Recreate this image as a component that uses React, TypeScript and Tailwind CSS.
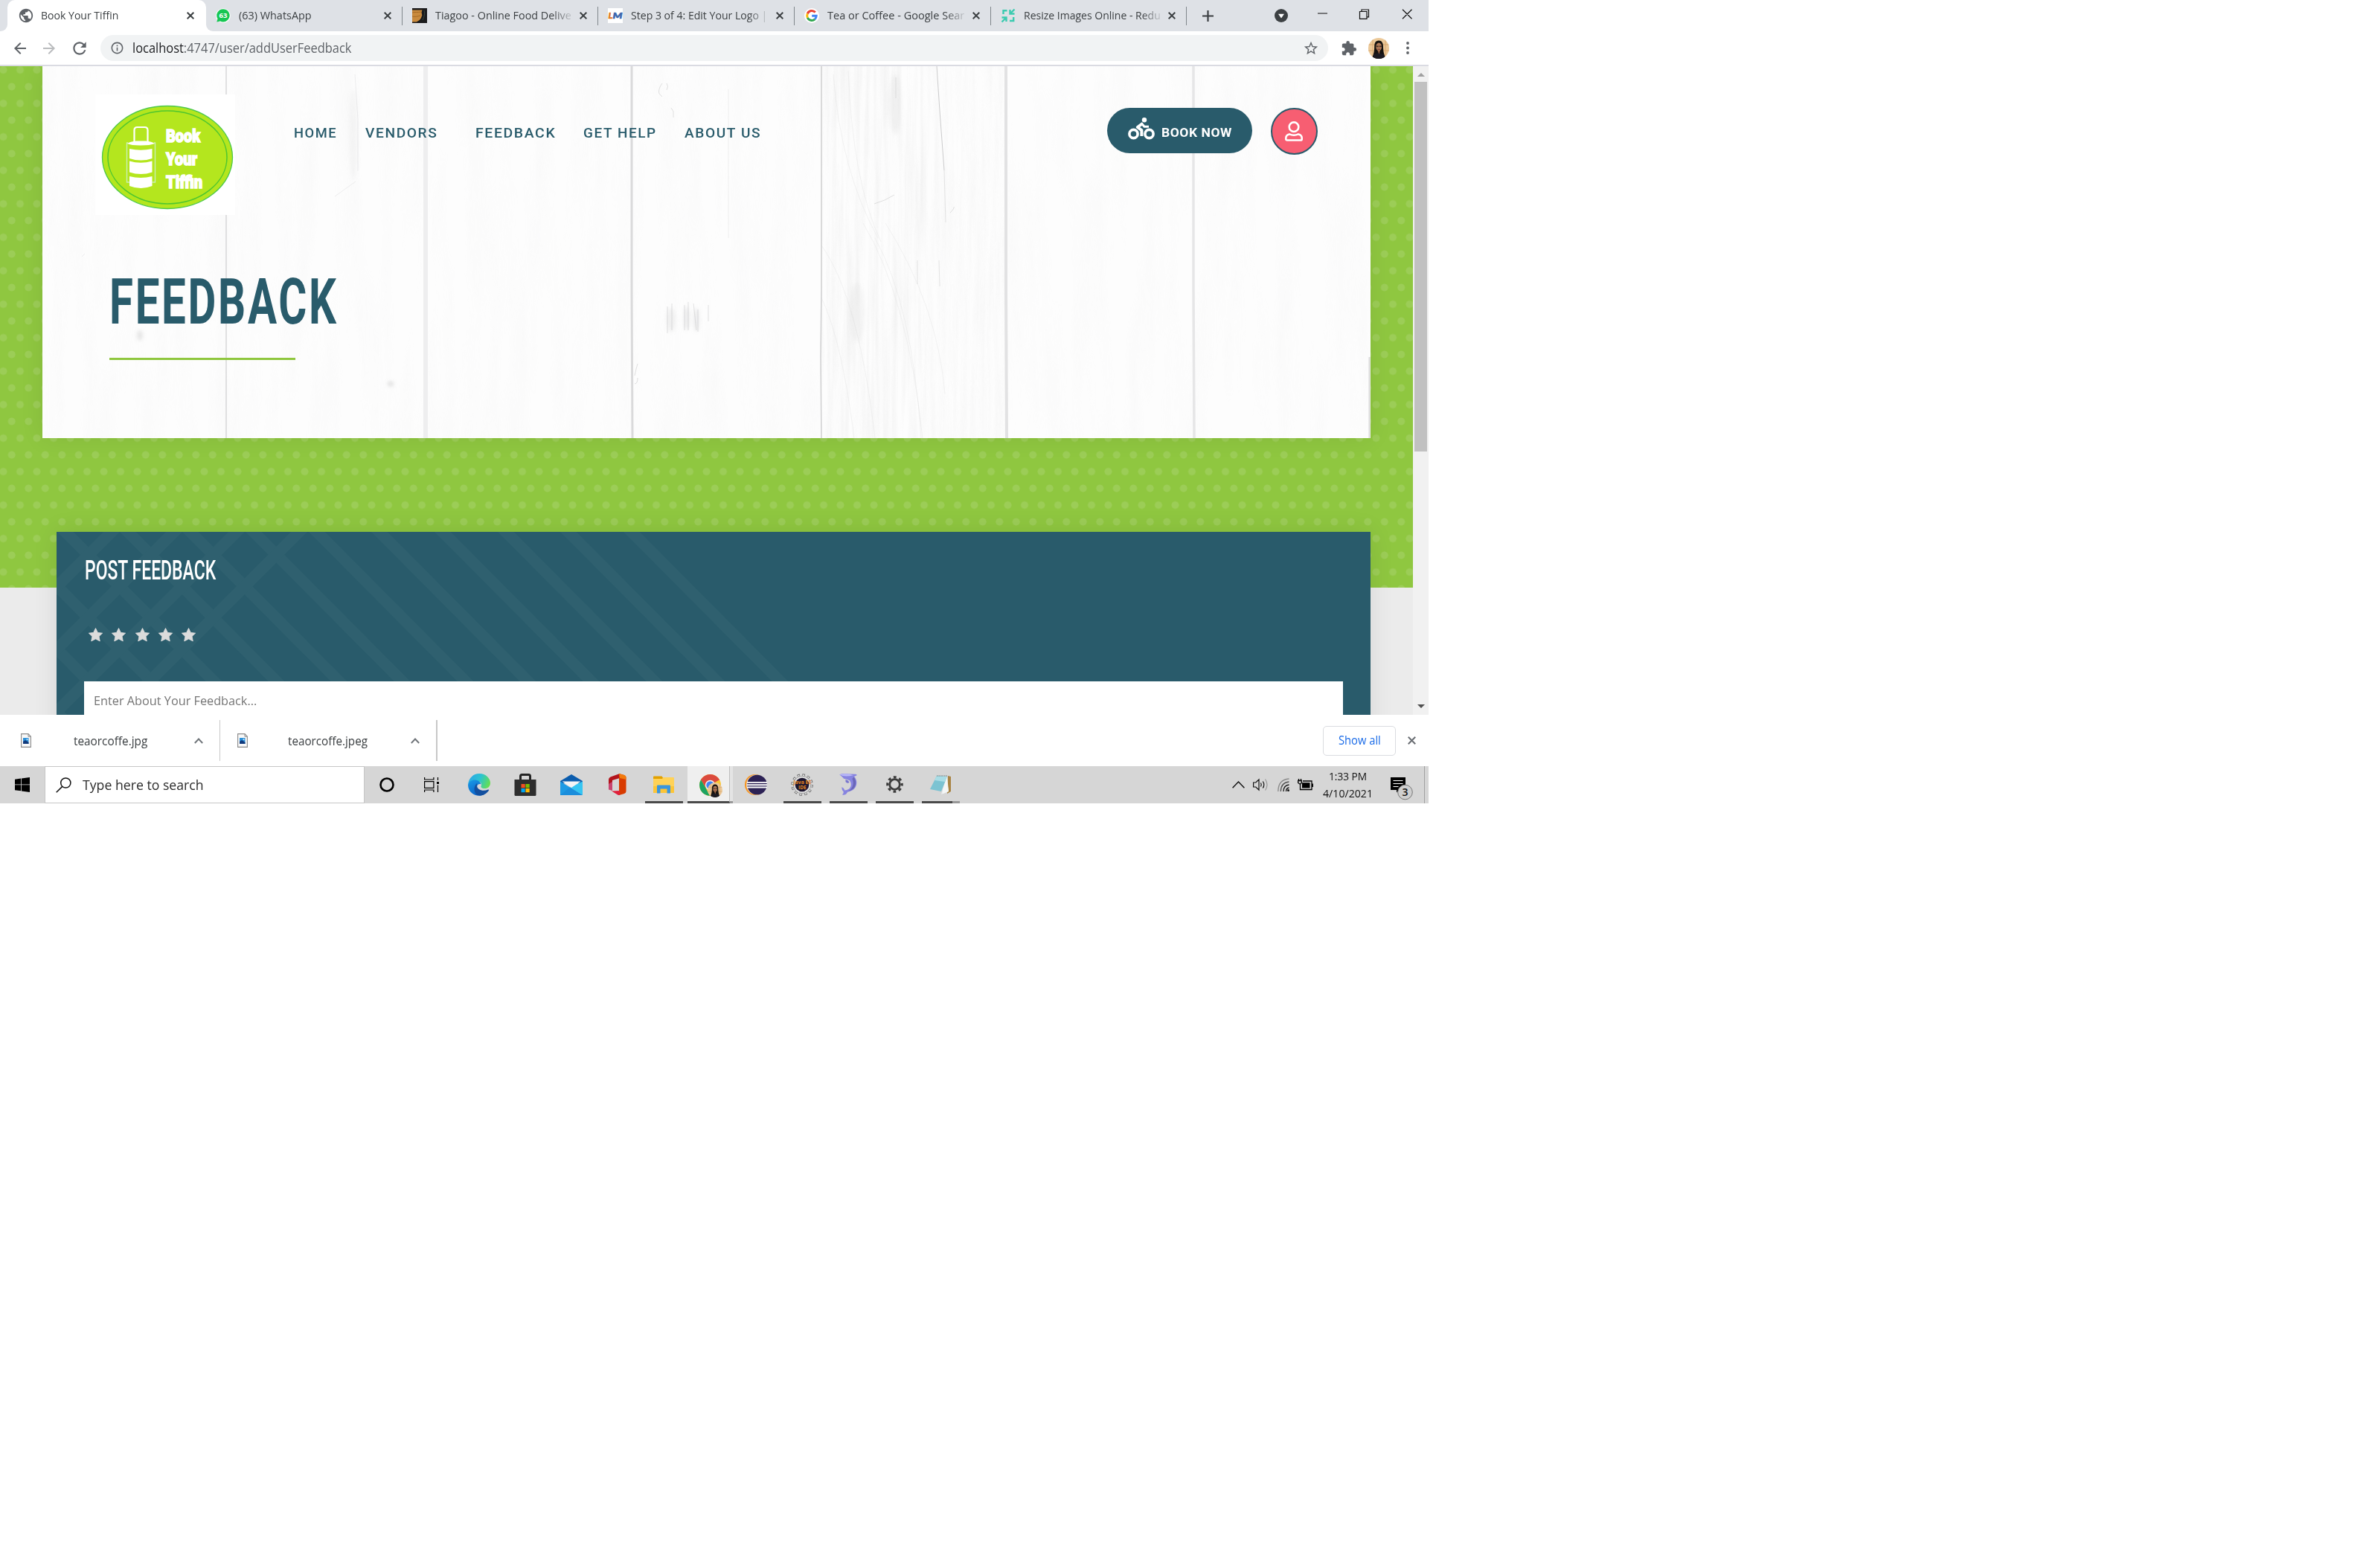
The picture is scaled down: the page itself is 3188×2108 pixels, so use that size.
import React, { useLayoutEffect, useRef, useState } from "react";
import {
  MdArrowBack,
  MdArrowForward,
  MdExtension,
  MdInfoOutline,
  MdPublic,
  MdRefresh,
  MdStarBorder,
} from "react-icons/md";

/* One line of text, condensed or widened to fill the width of its box. */
function Fit({ children, className = "" }: { children: React.ReactNode; className?: string }) {
  const box = useRef<HTMLDivElement>(null);
  const inner = useRef<HTMLSpanElement>(null);
  const [scale, setScale] = useState(1);
  useLayoutEffect(() => {
    const measure = () => {
      if (box.current && inner.current && inner.current.offsetWidth > 0) {
        setScale(box.current.clientWidth / inner.current.offsetWidth);
      }
    };
    measure();
    document.fonts.ready.then(measure);
  }, []);
  return (
    <div ref={box} className={"shrink-0 whitespace-nowrap " + className}>
      <span ref={inner} className="inline-block origin-left" style={{ transform: `scaleX(${scale})` }}>
        {children}
      </span>
    </div>
  );
}

function Cross({ className = "", size = 10, stroke = 2 }: { className?: string; size?: number; stroke?: number }) {
  return (
    <svg className={className} width={size} height={size} viewBox="0 0 10 10" fill="none" stroke="currentColor" strokeWidth={stroke}>
      <path d="M.7.7 9.3 9.3M9.3.7.7 9.3" />
    </svg>
  );
}

function Portrait({ size }: { size: number }) {
  return (
    <svg width={size} height={size} viewBox="0 0 28 28">
      <defs>
        <clipPath id="portrait">
          <circle cx="14" cy="14" r="14" />
        </clipPath>
      </defs>
      <g clipPath="url(#portrait)">
        <rect width="28" height="28" fill="#ecc999" />
        <path d="M0 9h28M0 17h28M6 0v28M23 0v28" stroke="#d9a870" strokeWidth="1" />
        <path d="M14 3.500c-4.300 0-5.800 3.600-5.800 8 0 5-.6 9-2 12.500L5 29h18l-1-5c-1.400-4-2-8-2-12.500 0-4.500-1.700-8-6-8z" fill="#17130f" />
        <ellipse cx="14.200" cy="12" rx="3.900" ry="5.400" fill="#b07a58" />
        <path d="M10.500 10.500h3.200v1.800h-3.200zM14.800 10.500h3.200v1.800h-3.200z" fill="#4a3225" />
        <path d="M12.400 15.300h3.600" stroke="#7c3b32" strokeWidth="1" />
        <path d="M5 29c0-6 4-8.500 9-8.500s9 2.500 9 8.500z" fill="#1c1a20" />
        <path d="M12.500 16.800h3.400L14.500 22z" fill="#9b6443" />
      </g>
    </svg>
  );
}

function WhatsAppBadge() {
  return (
    <svg width="20" height="20" viewBox="0 0 20 20">
      <circle cx="10" cy="10" r="9.800" fill="#fff" />
      <path d="M10 1.200a8.600 8.600 0 1 1-4 16.200L1.300 18.600l1.200-4.400A8.600 8.600 0 0 1 10 1.200z" fill="#16c653" />
      <text x="10" y="13.400" textAnchor="middle" fontSize="9.500" fontWeight="700" fill="#fff" fontFamily="Open Sans, sans-serif">63</text>
    </svg>
  );
}

function TiagooIcon() {
  return (
    <svg width="20" height="20" viewBox="0 0 20 20">
      <rect width="20" height="20" fill="#1b1b1d" />
      <path d="M0 2.500h13.500l-1 3 .8 4-1.500 4-2 2.500-4 2.500H0z" fill="#c98a3d" />
      <path d="M0 6c4-1 7 0 12-1M0 11c4 1 7 0 11-1" stroke="#a56a25" fill="none" />
      <path d="M16 3c1.500 4 0 9-2 13" stroke="#3d4a3f" fill="none" />
    </svg>
  );
}

function LogoMakerIcon() {
  return (
    <svg width="20" height="20" viewBox="0 0 20 20">
      <rect width="20" height="20" fill="#fff" />
      <text x=".5" y="14" fontSize="12" fontStyle="italic" fontWeight="900" fill="#e07b26" stroke="#e07b26" strokeWidth=".6" fontFamily="Lato, sans-serif">L</text>
      <text x="6.500" y="14" fontSize="12" fontStyle="italic" fontWeight="900" fill="#3b66ad" stroke="#3b66ad" strokeWidth=".6" textLength="13" lengthAdjust="spacingAndGlyphs" fontFamily="Lato, sans-serif">M</text>
    </svg>
  );
}

function GoogleIcon() {
  return (
    <svg width="20" height="20" viewBox="0 0 20 20">
      <circle cx="10" cy="10" r="10" fill="#fff" />
      <g fill="none" strokeWidth="3">
        <path d="M14.800 5.600A6.300 6.300 0 0 0 4.300 7.300" stroke="#ea4335" />
        <path d="M4.300 7.300a6.300 6.300 0 0 0 0 5.500" stroke="#fbbc05" />
        <path d="M4.300 12.800a6.300 6.300 0 0 0 9.900 2" stroke="#34a853" />
        <path d="M14.200 14.800a6.300 6.300 0 0 0 2-4.500H10.200" stroke="#4285f4" />
      </g>
    </svg>
  );
}

function ResizeIcon() {
  return (
    <svg width="20" height="20" viewBox="0 0 20 20" fill="none" stroke="#3ccbb0" strokeWidth="2.400">
      <path d="M3.500 8V3.200h5M12.500 2v5.500h6M18.500 1.500 13 7M1.500 12.500h6V18M7.500 12.500l-6 6M12 17h5.200v-5" />
    </svg>
  );
}

const tabs = [
  { icon: <WhatsAppBadge />, title: "(63) WhatsApp", box: "w-[98px]", fade: false },
  { icon: <TiagooIcon />, title: "Tiagoo - Online Food Delive", box: "w-[183px]", fade: true },
  { icon: <LogoMakerIcon />, title: "Step 3 of 4: Edit Your Logo |", box: "w-[183px]", fade: true },
  { icon: <GoogleIcon />, title: "Tea or Coffee - Google Sear", box: "w-[184px]", fade: true },
  { icon: <ResizeIcon />, title: "Resize Images Online - Redu", box: "w-[184px]", fade: true },
];

function TabStrip() {
  return (
    <div className="flex h-[42px] shrink-0 bg-[#dee1e6] text-[15px] leading-[40px] text-[#3c4043]">
      <div className="flex w-[10px] items-end bg-white">
        <div className="h-full w-full rounded-br-[9px] bg-[#dee1e6]" />
      </div>
      <div className="flex w-[267px] items-center rounded-t-[10px] bg-white">
        <MdPublic className="ml-[14px] size-[22px] text-[#5f6368]" />
        <Fit className="mb-[2px] ml-[9px] w-[104px]">Book Your Tiffin</Fit>
        <Cross className="mr-[16px] ml-auto" />
      </div>
      <div className="flex bg-white">
        <div className="flex rounded-bl-[9px] bg-[#dee1e6]">
          {tabs.map((t) => (
            <div key={t.title} className="relative flex w-[263.7px] items-center">
              <div className="ml-[13px]">{t.icon}</div>
              <Fit
                className={
                  t.box + " mb-[2px] ml-[11px]" + (t.fade ? " [mask-image:linear-gradient(to_right,black_86%,rgba(0,0,0,0.15))]" : "")
                }
              >
                {t.title}
              </Fit>
              <Cross className="mr-[15px] ml-auto" />
              <div className="absolute top-[9px] right-0 h-[25px] w-px bg-[#80868b]" />
            </div>
          ))}
        </div>
      </div>
      <div className="flex grow items-center">
        <svg className="ml-[21px]" width="15" height="15" viewBox="0 0 15 15" stroke="#3c4043" strokeWidth="2.200">
          <path d="M7.500 0v15M0 7.500h15" />
        </svg>
        <svg className="ml-[82px]" width="18" height="18" viewBox="0 0 18 18">
          <circle cx="9" cy="9" r="9" fill="#3c4043" />
          <path d="M5 6.800h8L9 12.500z" fill="#fff" />
        </svg>
        <svg className="mb-[5px] ml-[40px]" width="128" height="14" viewBox="0 0 128 14" fill="none" stroke="#111" strokeWidth="1.200">
          <path d="M0 6h13M56.500 3.500H66v9.800h-9.500zM59 3.500V1h9.500v9.800H66M114 .8l12.500 12.400M126.500.8 114 13.200" />
        </svg>
      </div>
    </div>
  );
}

function Toolbar() {
  return (
    <div className="flex h-[45px] shrink-0 items-center bg-white">
      <MdArrowBack className="ml-[15px] size-[24px] text-[#5f6368]" />
      <MdArrowForward className="ml-[15px] size-[24px] text-[#babcbe]" />
      <MdRefresh className="ml-[16px] size-[26px] text-[#5f6368]" />
      <div className="ml-[15px] flex h-[35px] w-[1650px] items-center rounded-full bg-[#f1f3f4] text-[17.5px] leading-[35px]">
        <MdInfoOutline className="ml-[13px] size-[19px] text-[#5f6368]" />
        <Fit className="ml-[11px] w-[294px] text-[#5f6368]">
          <span className="text-[#202124]">localhost</span>:4747/user/addUserFeedback
        </Fit>
        <MdStarBorder className="mr-[12px] ml-auto size-[22px] text-[#5f6368]" />
      </div>
      <MdExtension className="ml-[17px] size-[22px] text-[#5f6368]" />
      <div className="ml-[15px]">
        <Portrait size={28} />
      </div>
      <svg className="ml-[23px]" width="4" height="17" viewBox="0 0 4 17" fill="#5f6368">
        <circle cx="2" cy="2" r="1.900" />
        <circle cx="2" cy="8.500" r="1.900" />
        <circle cx="2" cy="15" r="1.900" />
      </svg>
    </div>
  );
}

/* Whitewashed planks behind the header: seams, grain and knots. */
function Planks() {
  return (
    <svg className="absolute inset-0" width="1785" height="500" viewBox="57 89 1785 500">
      <defs>
        <filter id="grain" x="0" y="0" width="1" height="1">
          <feTurbulence type="fractalNoise" baseFrequency="0.035 0.004" numOctaves="5" seed="7" />
          <feColorMatrix values="0 0 0 0 .55 0 0 0 0 .55 0 0 0 0 .56 1 0 0 0 -.4" />
        </filter>
        <filter id="denseGrain" x="0" y="0" width="1" height="1">
          <feTurbulence type="fractalNoise" baseFrequency="0.16 0.006" numOctaves="4" seed="12" />
          <feColorMatrix values="0 0 0 0 .5 0 0 0 0 .5 0 0 0 0 .5 1.2 0 0 0 -.45" />
        </filter>
        <filter id="soft" x="-.5" y="-.5" width="2" height="2">
          <feGaussianBlur stdDeviation="2.500" />
        </filter>
      </defs>
      <rect x="57" y="89" width="1785" height="500" fill="#fdfdfd" />
      <rect x="57" y="89" width="1785" height="500" filter="url(#grain)" opacity=".11" />
      <rect x="1104" y="89" width="140" height="500" filter="url(#denseGrain)" opacity=".22" />
      <rect x="1244" y="89" width="108" height="500" filter="url(#denseGrain)" opacity=".1" />
      <path d="M304 89v500" stroke="#d9d9da" strokeWidth="1.600" />
      <path d="M572 89v500" stroke="#eeeeef" strokeWidth="6" />
      <path d="M849 89v300l1 200" stroke="#dadadb" strokeWidth="3" fill="none" />
      <path d="M1104 89v300l-1 90 1 110" stroke="#d2d2d3" strokeWidth="1.600" fill="none" />
      <path d="M1352 89v300l1 200" stroke="#e2e2e3" strokeWidth="4" fill="none" />
      <path d="M1604 89v300l1 200" stroke="#e6e6e7" strokeWidth="3.500" fill="none" />
      <path d="M1840.500 480v109" stroke="#dadada" strokeWidth="2" />
      <g fill="none" stroke="#cbcbcc" strokeWidth="1">
        <path d="M1259 89l4 60 6 80" />
        <path d="M1269 229l2 70M1204 104v28M1233 350v32M1262 350l1 35" opacity=".5" />
        <path d="M979 120v200" opacity=".25" />
        <path d="M1175 274l14-5 13-7M1277 286q6-6 5-8M890 112q-6 8-4 14l4 4M896 112q3 4 0 9M902 145l3 5v8M853 505q2-10 4-16M853 516q4 0 4-8" opacity=".6" />
        <path d="M477 100l4 60v70M450 264l28-20M110 345l4-4" opacity=".3" />
        <path d="M1104 330q50 70 72 259M1104 400q28 60 44 189M1160 300q60 100 80 289M1190 300q70 110 80 230M1120 100q10 130 60 220M1140 95q6 150 44 230M1176 320q50 90 62 269" opacity=".22" />
      </g>
      <g stroke="#bdbdbe" strokeWidth="1.200" opacity=".35">
        <path d="M897 412v36M903 408v36M920 410v34M925 406v38M932 408l4 36M938 416v30M952 410v22" />
      </g>
      <g fill="#bdbdbe">
        <g filter="url(#soft)">
          <ellipse cx="902" cy="430" rx="6" ry="16" opacity=".2" />
          <ellipse cx="923" cy="428" rx="4" ry="16" opacity=".25" />
          <ellipse cx="936" cy="430" rx="4" ry="16" opacity=".25" />
          <ellipse cx="1152" cy="420" rx="10" ry="40" opacity=".12" />
          <ellipse cx="1203" cy="140" rx="8" ry="40" opacity=".15" />
          <ellipse cx="188" cy="451" rx="4" ry="7" opacity=".35" />
          <ellipse cx="475" cy="180" rx="6" ry="60" opacity=".1" />
          <ellipse cx="525" cy="516" rx="4" ry="3" opacity=".5" />
        </g>
      </g>
    </svg>
  );
}

function TiffinLogo() {
  return (
    <svg className="ml-[71px] bg-white" width="188" height="162" viewBox="128 127 188 162">
      <ellipse cx="225" cy="211.500" rx="87.500" ry="69" fill="#b4e61e" stroke="#4dc94a" strokeWidth="1.300" />
      <ellipse cx="225" cy="211.500" rx="80" ry="62.500" fill="none" stroke="#4fc62f" strokeWidth="1.500" />
      <path d="M180.500 192v-17q0-4 4-4h10q4 0 4 4v17" fill="none" stroke="#fff" strokeWidth="2.200" />
      <path d="M172 192h-1.500v53h4M207 192h1.500v53h-4" fill="none" stroke="#c9f0b4" strokeWidth="1.400" />
      <path d="M171 193q4-3 12-3.500h13q8 .5 12 3.500-6 2.500-19 2.500t-18-2.500z" fill="#fff" />
      <g fill="#fff">
        <path d="M174 200q15 3.500 30.500 0v13q-15 5-30.500 0z" />
        <path d="M174 216.500q15 4.500 30.500 0v15q-15 5-30.500 0z" />
        <path d="M174 237q15 4 30.500 0v13q-15 6-30.500 0z" />
      </g>
      <g fill="#fff" stroke="#fff" strokeWidth="1.500" fontFamily="Roboto, sans-serif" fontWeight="900" fontSize="23">
        <text x="223" y="191" textLength="46" lengthAdjust="spacingAndGlyphs">Book</text>
        <text x="223" y="222" textLength="42" lengthAdjust="spacingAndGlyphs">Your</text>
        <text x="223" y="253" textLength="49" lengthAdjust="spacingAndGlyphs">Tiffin</text>
      </g>
    </svg>
  );
}

function SiteHeader() {
  return (
    <div className="relative ml-[57px] h-[500px] w-[1785px] shadow-[0_0_30px_rgba(0,0,0,0.08)]">
      <Planks />
      <div className="relative flex h-full flex-col font-[Roboto,sans-serif] text-[#295b6b]">
        <div className="flex h-[200px] items-start pt-[38px]">
          <TiffinLogo />
          <nav className="mt-[38px] ml-[79px] flex text-[18px] leading-[28px] font-medium tracking-[1.5px]">
            <Fit className="w-[58px]">HOME</Fit>
            <Fit className="ml-[38px] w-[97px]">VENDORS</Fit>
            <Fit className="ml-[51px] w-[108px]">FEEDBACK</Fit>
            <Fit className="ml-[37px] w-[99px]">GET HELP</Fit>
            <Fit className="ml-[37px] w-[103px]">ABOUT US</Fit>
          </nav>
          <div className="mt-[18px] ml-auto flex h-[61px] w-[195px] rounded-[31px] bg-[#295b6b] text-white">
            <svg className="mt-[13px] ml-[28px] shrink-0" width="36" height="30" viewBox="0 0 36 30" fill="none" stroke="#fff">
              <circle cx="7.500" cy="22" r="5.600" strokeWidth="3.600" />
              <circle cx="28.500" cy="22" r="5.600" strokeWidth="3.600" />
              <circle cx="22" cy="3.300" r="3.200" fill="#fff" stroke="none" />
              <path d="M19.800 7.800 12.800 13l5.600 4.200V25" strokeWidth="4" strokeLinejoin="round" />
              <path d="M18 7.500l4 4.800h6" strokeWidth="3" strokeLinejoin="round" />
            </svg>
            <Fit className="mt-[19px] ml-[9px] w-[95px] text-[17px] leading-[28px] font-bold tracking-[0.5px]">BOOK NOW</Fit>
          </div>
          <div className="mt-[18px] mr-[71px] ml-[25px] flex size-[63px] items-center justify-center rounded-full border-2 border-[#295b6b] bg-[#f75e72]">
            <svg className="mr-[2px]" width="24" height="27" viewBox="0 0 24 27" fill="none" stroke="#fff" strokeWidth="2.600">
              <ellipse cx="12" cy="7.700" rx="6.300" ry="6.300" />
              <path d="M6 17.400q6 2.600 12 0 4.700 1 4.700 5v1.500q0 1.600-1.700 1.600H3q-1.700 0-1.700-1.600v-1.500q0-4 4.700-5z" strokeLinejoin="round" />
            </svg>
          </div>
        </div>
        <Fit className="mt-[74px] ml-[90px] h-[86px] w-[308px] text-[86px] leading-[86px] font-bold tracking-[4px]">
          FEEDBACK
        </Fit>
        <div className="mt-[32px] ml-[90px] h-[3px] w-[250px] bg-[#8fc73e]" />
      </div>
    </div>
  );
}

const fallingStripes = [-333.5, -249, -164.5, -80, 4, 88, 172, 256, 341, 426, 510, 595, 680, 764, 849];
const risingStripes = [66, 150, 234, 318, 402];

function FeedbackPanel() {
  return (
    <div className="relative -mt-[75px] ml-[76px] h-[420px] w-[1766px] bg-[#295b6b] shadow-[0_0_32px_rgba(0,0,0,0.09)]">
      <svg className="absolute inset-0" width="1766" height="246" viewBox="76 715 1766 246" fill="none" stroke="#2f606f" strokeWidth="15.500">
        {fallingStripes.map((x) => (
          <path key={x} d={`M${x - 20} 695l300 302`} />
        ))}
        {risingStripes.map((x) => (
          <path key={x} d={`M${x + 20} 695l-300 300`} />
        ))}
      </svg>
      <div className="relative flex h-full flex-col px-[37px] pt-[32px]">
        <Fit className="ml-px h-[40px] w-[176px] font-[Roboto,sans-serif] text-[36px] leading-[40px] font-medium text-white">POST FEEDBACK</Fit>
        <div className="mt-[57px] ml-[6px] flex gap-[12.300px]">
          {[0, 1, 2, 3, 4].map((i) => (
            <svg key={i} width="19" height="19" viewBox="0 0 19 19" fill="#dcdcdc" stroke="#dcdcdc" strokeWidth=".8">
              <path d="M9.500.5l2.900 5.900 6.300.8-4.600 4.400L15.300 18l-5.800-3-5.800 3 1.200-6.400L.3 7.200l6.300-.8z" />
            </svg>
          ))}
        </div>
        <div className="mt-[53px] h-[200px] w-[1692px] bg-white pt-[12px] pl-[13px]">
          <Fit className="w-[219px] text-[17px] leading-[28px] text-[#757575]">Enter About Your Feedback...</Fit>
        </div>
      </div>
    </div>
  );
}

function Viewport() {
  return (
    <div className="flex h-[872px] shrink-0 overflow-hidden">
      <div className="w-[1899px] overflow-hidden bg-[#ebebeb]">
        <div className="h-[701px] bg-[#8fc740] bg-[radial-gradient(circle,#9ccd57_4.700px,transparent_5.300px),radial-gradient(circle,#9ccd57_4.700px,transparent_5.300px)] bg-[length:22.500px_45px] bg-[position:-6.750px_-17.500px,4.500px_5px]">
          <SiteHeader />
        </div>
        <FeedbackPanel />
      </div>
      <div className="flex w-[21px] flex-col items-center bg-[#f1f1f1]">
        <svg className="mt-[9px]" width="10" height="5" viewBox="0 0 10 5" fill="#a0a0a0">
          <path d="M0 5 5 0l5 5z" />
        </svg>
        <div className="mt-[7px] h-[497px] w-[17px] bg-[#c1c1c1]" />
        <svg className="mt-auto mb-[9px]" width="10" height="5" viewBox="0 0 10 5" fill="#505050">
          <path d="M0 0h10L5 5z" />
        </svg>
      </div>
    </div>
  );
}

function ImageFile() {
  return (
    <svg width="14" height="19" viewBox="0 0 14 19">
      <path d="M.6.600h9.400l3.400 3.600v14.200H.6z" fill="#f8f8f8" stroke="#8a8a8a" strokeWidth="1.100" />
      <path d="M10 .6v3.600h3.400" fill="none" stroke="#8a8a8a" />
      <rect x="3" y="6" width="7.500" height="8" fill="#2a8fd8" />
      <path d="M3 11l3-2 4.500 3v2H3z" fill="#123a7c" />
      <circle cx="8.500" cy="8" r="1" fill="#cfeaff" />
    </svg>
  );
}

function Caret() {
  return (
    <svg width="12" height="8" viewBox="0 0 12 8" fill="none" stroke="#70757a" strokeWidth="1.900">
      <path d="M.8 7 6 1.500 11.200 7" />
    </svg>
  );
}

function DownloadShelf() {
  return (
    <div className="flex h-[69px] shrink-0 items-center bg-white text-[15.5px] leading-[24px] text-[#3c4043]">
      <div className="flex h-[55px] w-[296px] items-center border-r border-[#c8c8c8]">
        <div className="ml-[28px]"><ImageFile /></div>
        <Fit className="ml-[57px] w-[99px]">teaorcoffe.jpg</Fit>
        <div className="ml-[63px]"><Caret /></div>
      </div>
      <div className="flex h-[55px] w-[292px] items-center border-r-2 border-[#c8c8c8]">
        <div className="ml-[23px]"><ImageFile /></div>
        <Fit className="ml-[54px] w-[107px]">teaorcoffe.jpeg</Fit>
        <div className="ml-[58px]"><Caret /></div>
      </div>
      <div className="ml-auto flex h-[40px] w-[98px] items-center justify-center rounded-[5px] border border-[#dadce0] text-[#1a6be8]">
        <Fit className="mb-[2px] w-[57px]">Show all</Fit>
      </div>
      <Cross className="mr-[17px] ml-[16px] text-[#6a6e73]" size={11} stroke={1.8} />
    </div>
  );
}

const Edge = () => (
  <svg width="30" height="30" viewBox="0 0 30 30">
    <defs>
      <linearGradient id="edgeTop" x1="0" y1=".3" x2="1" y2=".6">
        <stop offset="0" stopColor="#2aa7e6" />
        <stop offset=".5" stopColor="#2bc3d2" />
        <stop offset="1" stopColor="#66e04f" />
      </linearGradient>
      <linearGradient id="edgeLeft" x1="0" y1="0" x2=".5" y2="1">
        <stop offset="0" stopColor="#1a9be6" />
        <stop offset="1" stopColor="#0a62c8" />
      </linearGradient>
    </defs>
    <path d="M0 15C1 6 7 0 15.200 0 24 0 30 6.500 30 12.500c0 5-3.500 7.500-7.500 7.500-4 0-5.500-1.500-5-3 1.500-2.500 0-6-4-7C8 9 3 11 0 15z" fill="url(#edgeTop)" />
    <path d="M0 15c2-5 6-7 10-6.500 4 .5 7 3 7.500 6-3-1.500-6 1-5.500 5 .5 4.500 4.500 8.500 10 8.500-9 5-22-1-22-13z" fill="url(#edgeLeft)" />
    <path d="M11.500 13.500c-4 4-4.500 12 1.500 15.500 6 1.500 12-1.500 15-6.500.5-1-.3-1.300-1-1-7 3-14.500.5-15-5-.1-1 .2-2.200.5-3z" fill="#124f9f" />
  </svg>
);

const Store = () => (
  <svg width="30" height="30" viewBox="0 0 30 30">
    <path d="M8.500 9V3.500Q8.500 1.500 10.500 1.500h9q2 0 2 2V9" fill="none" stroke="#252525" strokeWidth="3" />
    <path d="M.5 8h29v20.500q0 1.500-1.500 1.500H2Q.5 30 .5 28.500z" fill="#2e2e2e" />
    <path d="M9.500 14h5.200v5.200H9.500z" fill="#f25022" />
    <path d="M15.500 14h5.200v5.200h-5.200z" fill="#7fba00" />
    <path d="M9.500 20h5.200v5.200H9.500z" fill="#00a4ef" />
    <path d="M15.500 20h5.200v5.200h-5.200z" fill="#ffb900" />
  </svg>
);

const Mail = () => (
  <svg width="30" height="28" viewBox="0 0 30 28">
    <path d="M0 9 15 0l15 9v3H0z" fill="#0b5cad" />
    <path d="M0 9.500 30 28H0z" fill="#1e9ae4" />
    <path d="M30 9.500V28L13 17.500z" fill="#35c5f2" />
    <path d="M0 28l13-10.500L30 28z" fill="#1b8edc" />
    <path d="M2.500 9.500h25L15 18z" fill="#f3f3f5" />
  </svg>
);

const Office = () => (
  <svg width="24" height="29" viewBox="0 0 24 29">
    <path d="M15 0 2.500 4.500Q0 5.500 0 8v12.500L5 22V9l10-3z" fill="#b3141c" />
    <path d="M0 14v7.500L5 23V11z" fill="#c8456f" />
    <path d="M14 0l7 2q2.500.8 2.500 3v19q0 2.200-2.500 3l-7 2z" fill="#d83b01" />
    <path d="M14 0l7 2q2.500.8 2.500 3v3L15 6z" fill="#f27a0c" />
    <path d="M4 23.500 15 23v5.500q-1 .8-2.500.3z" fill="#e0203c" />
  </svg>
);

const Explorer = () => (
  <svg width="28" height="24" viewBox="0 0 28 24">
    <path d="M0 1.500Q0 .5 1 .5h10.500L14 4H0z" fill="#e2a100" />
    <path d="M0 4h12l1.500-2H27q1 0 1 1v20H0z" fill="#ffd257" />
    <path d="M0 14h28v8q0 1-1 1H0z" fill="#fcc537" />
    <path d="M5 23.500v-10q0-1 1-1h16q1 0 1 1v10h-4.500v-6h-9v6z" fill="#3a96dd" />
  </svg>
);

const Chrome = () => (
  <div className="relative">
    <svg width="29" height="29" viewBox="0 0 29 29">
      <circle cx="14.500" cy="14.500" r="14.500" fill="#fcc934" />
      <path d="M14.500 14.500 2 7.250A14.500 14.500 0 0 1 27.050 7.250z" fill="#db4a3e" />
      <path d="M2 7.250 8.500 18l6 1v-11h12.500A14.500 14.500 0 0 0 2 7.250z" fill="#db4a3e" />
      <path d="M2 7.250l6.600 11.200L14 29A14.500 14.500 0 0 1 2 7.250z" fill="#1da362" />
      <circle cx="14.500" cy="14.500" r="6.700" fill="#f4f4f4" />
      <circle cx="14.500" cy="14.500" r="5.200" fill="#4285f4" />
    </svg>
    <div className="absolute top-[11px] left-[11px]">
      <Portrait size={20} />
    </div>
  </div>
);

const Eclipse = () => (
  <svg width="30" height="28" viewBox="0 0 30 28">
    <circle cx="14" cy="14" r="14" fill="#f7941e" />
    <circle cx="15.500" cy="14" r="13.500" fill="#e2d5c5" />
    <circle cx="16.500" cy="14" r="13.300" fill="#2c2255" />
    <path d="M3 9.900h27v1.900H3zM3 13.300h27v1.900H3zM3 16.500h27v1.900H3z" fill="#fff" />
  </svg>
);

const JavaEE = () => (
  <svg width="30" height="30" viewBox="0 0 30 30">
    <circle cx="15" cy="15" r="13.300" fill="none" stroke="#6e6e6e" strokeWidth="3" strokeDasharray="3.500 3.464" />
    <circle cx="15" cy="15" r="13" fill="none" stroke="#e6e6e6" strokeWidth="1.800" strokeDasharray="2 4.807" strokeDashoffset="-.7" />
    <circle cx="15" cy="15" r="11.700" fill="#e2e2e2" stroke="#7a7a7a" strokeWidth=".6" />
    <circle cx="15" cy="15" r="9.300" fill="#1d1730" />
    <g fill="#e8861f" fontFamily="Open Sans, sans-serif" fontWeight="700" fontSize="7">
      <text x="3.500" y="14" textLength="23.500" lengthAdjust="spacingAndGlyphs">Java EE</text>
      <text x="10" y="20.500" textLength="10.500" lengthAdjust="spacingAndGlyphs">IDE</text>
    </g>
  </svg>
);

/* Leaping dolphin: beak at the upper left, tail fluke at the lower left. */
const Dolphin = () => (
  <svg width="25" height="29" viewBox="0 0 25 29">
    <path d="M.3 1.200Q6-.6 13 .6l9 .2q2.300.4 1.200 1.800l-3.200 1.400c3.600 3.800 4.300 9.300 2 13.800-2.300 4.400-6.800 6-10.500 6.800l-2.500 3.200q-2.500 1.200-5 .8 2-2 1.700-4.200-2.600-2-2.400-6.200 2.500.4 4 4.200 6-.4 8-5 1.400-4.200-1.300-8.200Q10 7.500 6 6.800L4.500 5z" fill="#8784e0" />
    <path d="M.3 1.200Q10-1.200 19 2.300q-8 2-14.500.8z" fill="#b9b8f8" />
    <path d="M19.500 4.500c3.400 4.500 3.400 10.500.6 14.500-2.100 2.600-5.100 4.100-8.600 4.900 6-3.400 9.200-9.900 6-17z" fill="#6a67b8" />
    <path d="M8.500 8q4 1 5 4-3 2-5-1z" fill="#7875cf" />
  </svg>
);

const Gear = () => (
  <svg width="23" height="23" viewBox="0 0 23 23" fill="none" stroke="#3c3c3c">
    <circle cx="11.500" cy="11.500" r="6.800" strokeWidth="2.800" />
    <circle cx="11.500" cy="11.500" r="9.700" strokeWidth="3.200" strokeDasharray="3.800 3.818" strokeDashoffset="1.900" />
  </svg>
);

const Notepad = () => (
  <svg width="29" height="26" viewBox="0 0 29 26">
    <path d="M24 1l4 1v20l-5 3z" fill="#a88443" />
    <path d="M22 2l3 20-10 4z" fill="#e9eef0" />
    <path d="M9 1l14 1-8 20L0 19z" fill="#7cc3d2" />
    <path d="M9 1l14 1-3 7-14-2z" fill="#a9dde6" />
    <path d="M17 20 23 2l2 20-8 3z" fill="#f4f6f6" />
    <path d="M9 1h14" stroke="#6d7a7d" strokeDasharray="1.500 1" />
  </svg>
);

const apps = [
  { name: "edge", icon: <Edge />, running: false },
  { name: "store", icon: <Store />, running: false },
  { name: "mail", icon: <Mail />, running: false },
  { name: "office", icon: <Office />, running: false },
  { name: "explorer", icon: <Explorer />, running: true },
  { name: "chrome", icon: <Chrome />, running: true },
  { name: "eclipse", icon: <Eclipse />, running: false },
  { name: "javaee", icon: <JavaEE />, running: true },
  { name: "dolphin", icon: <Dolphin />, running: true },
  { name: "gear", icon: <Gear />, running: true },
  { name: "notepad", icon: <Notepad />, running: true },
];

function AppButton({ name, icon, running }: { name: string; icon: React.ReactNode; running: boolean }) {
  if (name === "chrome") {
    return (
      <div className="flex w-[62px] pl-px">
        <div className="flex w-[57px] flex-col items-center border-r border-b-[3px] border-r-[#bdbdbd] border-b-[#4a4a4a] bg-[#efefef] pt-[11px] pl-[4px]">
          {icon}
        </div>
        <div className="w-[4px] border-b-[3px] border-[#989898] bg-[#e4e4e4]" />
      </div>
    );
  }
  return (
    <div className="flex w-[62px] flex-col items-center">
      <div className="flex h-[47px] items-center pt-[2px]">{icon}</div>
      {running && (
        <div className="flex h-[3px] w-[51px] bg-[#4a4a4a]">
          {name === "notepad" && <div className="ml-auto w-[10px] bg-[#989898]" />}
        </div>
      )}
    </div>
  );
}

function Taskbar() {
  return (
    <div className="flex h-[50px] shrink-0 bg-[#d6d6d6] text-[#111]">
      <div className="flex w-[60px] items-center pl-[20px]">
        <svg width="20" height="20" viewBox="0 0 20 20" fill="#000">
          <path d="M0 2.800 8.200 1.600v7.900H0zM9 1.500 20 0v9.500H9zM0 10.300h8.200v8.000L0 17.200zM9 10.300h11V20L9 18.500z" />
        </svg>
      </div>
      <div className="flex w-[430px] items-center border border-[#c6c6c6] bg-white">
        <svg className="ml-[14px]" width="21" height="21" viewBox="0 0 21 21" fill="none" stroke="#111" strokeWidth="1.500">
          <circle cx="13.300" cy="7.500" r="6.600" />
          <path d="M8.700 12.400.7 20.300" />
        </svg>
        <Fit className="ml-[15px] w-[163px] text-[18px] leading-[48px] text-[#2b2b2b]">Type here to search</Fit>
      </div>
      <div className="flex w-[62px] items-center pl-[20px]">
        <svg width="20" height="20" viewBox="0 0 20 20" fill="none" stroke="#000" strokeWidth="2.600">
          <circle cx="10" cy="10" r="8.500" />
        </svg>
      </div>
      <div className="flex w-[61px] items-center pl-[18px]">
        <svg width="20" height="20" viewBox="0 0 20 20" fill="none" stroke="#000" strokeWidth="1.200">
          <path d="M.6 0v3h12.300V0M.6 5.600h12.300v8.800H.6zM.6 20v-3h12.300v3M18.500 0v4M18.500 10.500V20" />
          <rect x="17" y="6" width="3" height="3" fill="#000" stroke="none" />
        </svg>
      </div>
      {apps.map((a) => (
        <AppButton key={a.name} {...a} />
      ))}
      <div className="ml-auto flex items-center">
        <svg width="17" height="10" viewBox="0 0 17 10" fill="none" stroke="#111" strokeWidth="1.400">
          <path d="M.6 9.300 8.500 1l7.900 8.300" />
        </svg>
        <svg className="ml-[11px]" width="21" height="18" viewBox="0 0 21 18" fill="none" stroke="#111" strokeWidth="1.200">
          <path d="M.6 6h3.200L8 2v14l-4.200-4H.6zM10.500 6.500q1.500 2.500 0 5M13.300 4.500q3 4.500 0 9" />
          <path d="M16.500 1.500q5 7.500 0 15" stroke="#999" />
        </svg>
        <svg className="ml-[12px]" width="17" height="18" viewBox="0 0 17 18" fill="none" stroke="#111" strokeWidth="1.300">
          <path d="M.8 18Q1 2 15.500 1" stroke="#8a8a8a" />
          <path d="M4.300 18Q4.500 6 15.500 5" stroke="#555" />
          <path d="M8 18q0-8 7.500-9M11.500 18q0-4.500 4-5" />
          <circle cx="14.500" cy="16.500" r="1.500" fill="#111" stroke="none" />
        </svg>
        <svg className="ml-[10px]" width="21" height="16" viewBox="0 0 21 16" fill="none" stroke="#000" strokeWidth="1.300">
          <path d="M7 3h12v11.500H3.500V8M1.500 0v2.500M4.500 0v2.500M.7 2.500h4.600v3L3.500 7.500.7 5.500zM20.300 6.500v4.500" />
          <rect x="6" y="5.200" width="10.500" height="7.200" fill="#000" stroke="none" />
        </svg>
        <div className="ml-[12px] flex w-[68px] flex-col items-center text-[15px] leading-[23.5px]">
          <Fit className="w-[51px]">1:33 PM</Fit>
          <Fit className="w-[67px]">4/10/2021</Fit>
        </div>
        <svg className="mt-[10px] ml-[24px]" width="31" height="31" viewBox="0 0 31 31">
          <path d="M0 0h20v17h-9l-3 3.500V17H0z" fill="#000" />
          <path d="M3.500 4.500h13M3.500 8.500h13M3.500 12.500h7" stroke="#fff" strokeWidth="1.200" />
          <circle cx="19.500" cy="20" r="9.800" fill="#cfcfcf" stroke="#777" />
          <text x="19.500" y="25" textAnchor="middle" fontSize="14" fontWeight="600" fill="#111" fontFamily="Open Sans, sans-serif">3</text>
        </svg>
        <div className="mr-[5px] ml-[14px] h-[50px] w-px bg-[#a0a0a0]" />
      </div>
    </div>
  );
}

export default function App() {
  return (
    <div className="min-h-[2108px] bg-white">
      <div className="flex h-[1080px] w-[1920px] flex-col overflow-hidden font-['Open_Sans','Noto_Sans',sans-serif]">
        <TabStrip />
        <Toolbar />
        <div className="h-[2px] shrink-0 bg-[#dadbe2]" />
        <Viewport />
        <DownloadShelf />
        <Taskbar />
      </div>
    </div>
  );
}
